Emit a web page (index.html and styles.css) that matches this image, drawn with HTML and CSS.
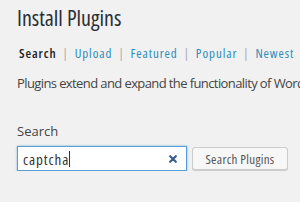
FILE: index.html
```html
<!DOCTYPE html>
<html>
    <head>
        <link rel="stylesheet" href="styles.css">
    </head>
    <body>
        <div class="wrap">
            <h1 class="title">Install Plugins</h1>
            <ul class="tabs">
                <li class="current">Search</li>
                <li class="sep">|</li>
                <li><a href="#">Upload</a></li>
                <li class="sep">|</li>
                <li><a href="#">Featured</a></li>
                <li class="sep">|</li>
                <li><a href="#">Popular</a></li>
                <li class="sep">|</li>
                <li><a href="#">Newest</a></li>
            </ul>
            <p class="intro">Plugins extend and expand the functionality of WordPress.</p>
            <form class="search-form" action="">
                <label class="search-label" for="s">Search</label>
                <div class="search-row">
                    <div class="search-box">
                        <span class="search-value">captcha</span><span class="caret"></span>
                        <svg class="clear" width="8" height="8" viewBox="0 0 8 8">
                            <path d="M1.2 1.2 L6.8 6.8 M6.8 1.2 L1.2 6.8" stroke="#3a5f8e" stroke-width="2.2" stroke-linecap="round"/>
                        </svg>
                    </div>
                    <button type="button" class="button">Search Plugins</button>
                </div>
            </form>
        </div>
    </body>
</html>
```

FILE: styles.css
```css
html, body {
    margin: 0;
    background-color: #f1f1f1;
}
body {
    font-family: "Open Sans", "Liberation Sans", sans-serif;
    color: #444;
    overflow: hidden;
}
.wrap {
    padding-left: 17px;
    white-space: nowrap;
}
.title {
    margin: 0;
    padding-top: 2px;
    font-size: 22px;
    font-stretch: 75%;
    line-height: 30px;
    font-weight: 400;
    color: #2a2e33;
}
.tabs {
    list-style: none;
    margin: 11px 0 0 2px;
    padding: 0;
    display: flex;
    gap: 6px;
    font-size: 13px;
    font-stretch: 75%;
    letter-spacing: .9px;
    line-height: 20px;
}
.tabs a {
    color: #2e8cb8;
    text-decoration: none;
}
.tabs .current {
    font-weight: 600;
    color: #222;
}
.tabs .sep {
    color: #aaa;
}
.intro {
    margin: 10px 0 0;
    font-size: 13px;
    letter-spacing: -.6px;
    line-height: 20px;
}
.search-form {
    margin-top: 28px;
}
.search-label {
    display: block;
    font-size: 13px;
    line-height: 20px;
}
.search-row {
    display: flex;
    align-items: flex-start;
    gap: 5px;
    margin-top: 5px;
}
.search-box {
    width: 170px;
    height: 25px;
    box-sizing: border-box;
    border: 1px solid #5b9dd9;
    box-shadow: 0 0 2px rgba(30, 140, 190, .6);
    background-color: #fff;
    display: flex;
    align-items: center;
    padding: 0 9px 0 5px;
    font-size: 15px;
    font-stretch: 75%;
    letter-spacing: .9px;
    color: #333;
}
.caret {
    width: 1px;
    height: 16px;
    background-color: #333;
}
.clear {
    margin-left: auto;
}
.button {
    margin-top: 1px;
    width: 96px;
    height: 23px;
    padding: 0;
    border: 1px solid #ccc;
    border-radius: 3px;
    background-color: #f7f7f7;
    box-shadow: 0 1px 0 #ccc;
    font-family: inherit;
    font-stretch: 75%;
    letter-spacing: .3px;
    font-size: 13px;
    color: #555;
}
```
